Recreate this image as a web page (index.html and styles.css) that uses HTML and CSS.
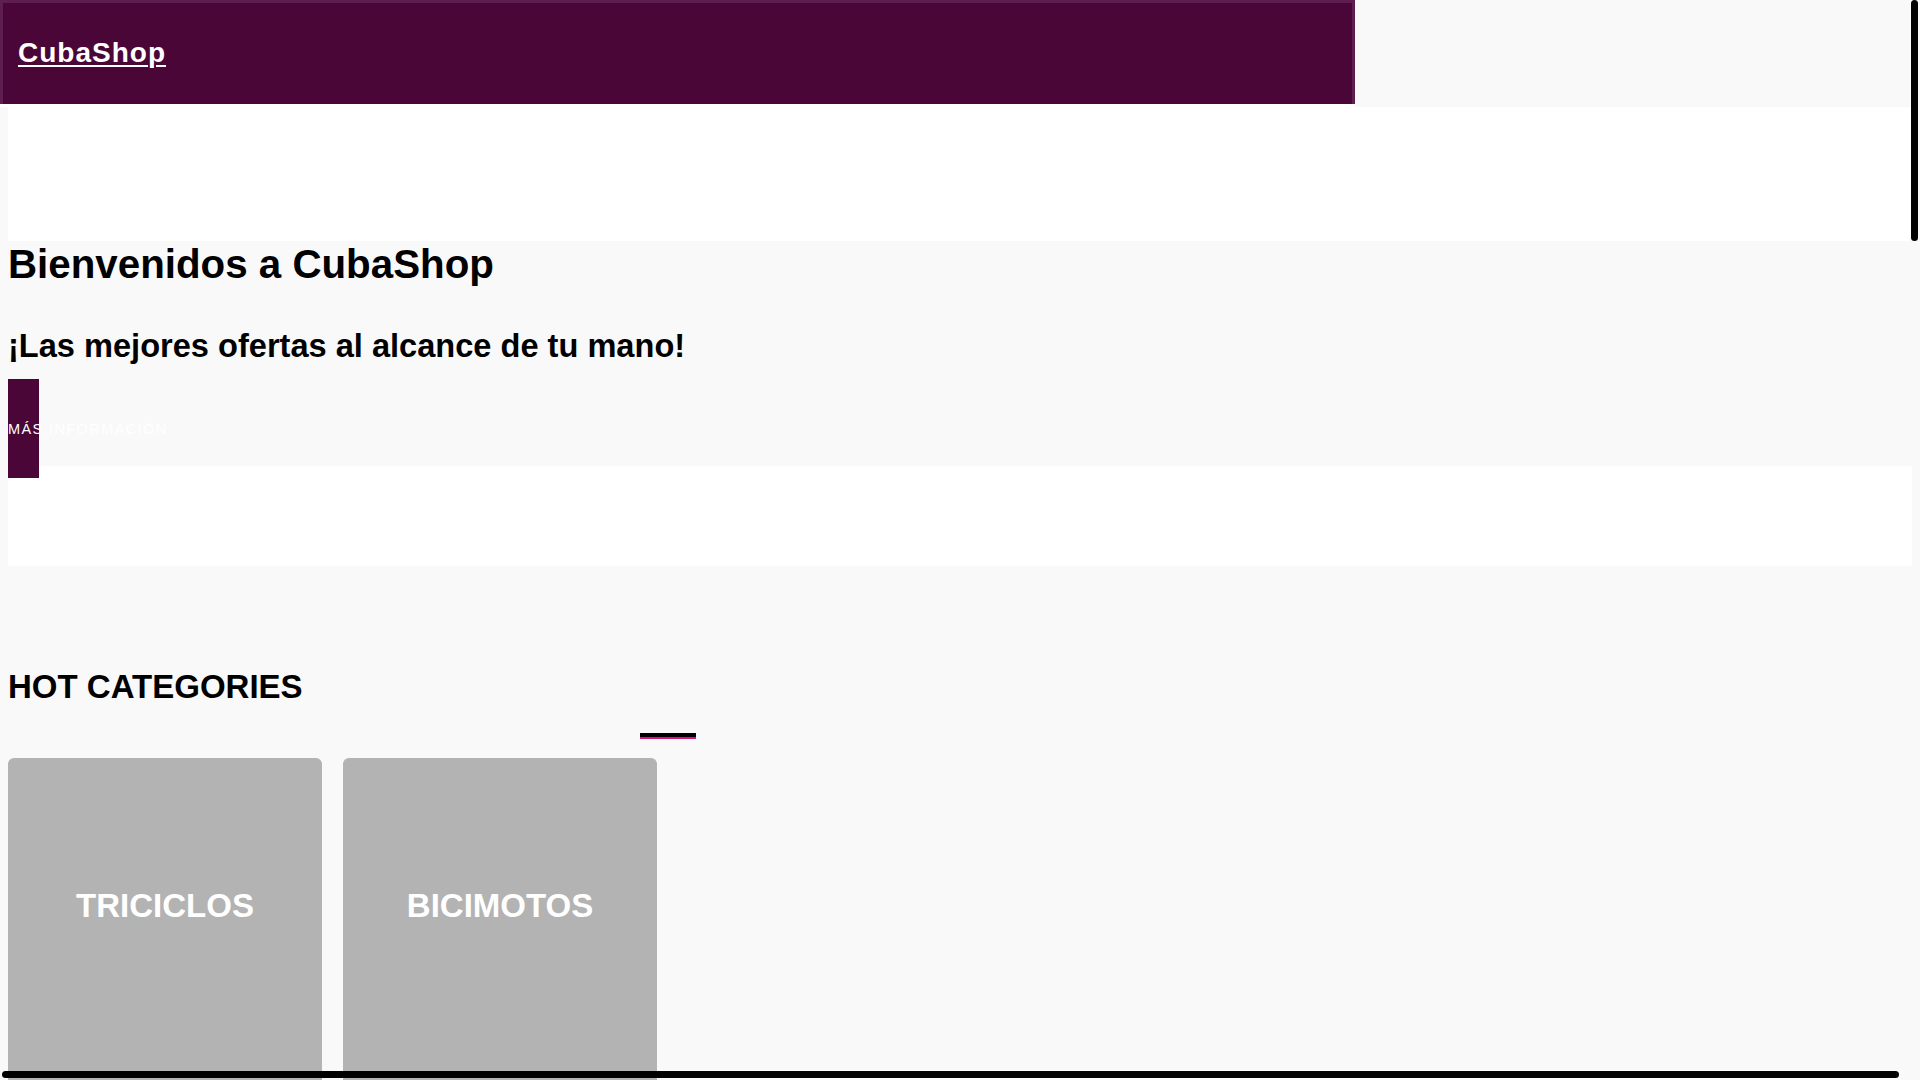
FILE: index.html
```html
<!DOCTYPE html>
<html lang="es">
<head>
<meta charset="utf-8">
<title>CubaShop</title>
<link rel="stylesheet" href="styles.css">
</head>
<body>
<div class="topbar">
  <nav class="navbar"><a class="brand" href="#">CubaShop</a></nav>
  <div class="topfill"></div>
</div>
<main class="main">
  <div class="spacer"></div>
  <section class="hero">
    <h1 class="hero-title">Bienvenidos a CubaShop</h1>
    <h2 class="hero-sub">¡Las mejores ofertas al alcance de tu mano!</h2>
    <a class="hero-btn" href="#">MÁS INFORMACIÓN</a>
  </section>
  <div class="gap"></div>
  <section class="categories">
    <h2 class="cat-title">HOT CATEGORIES</h2>
    <div class="cat-bar"></div>
    <div class="cat-grid">
      <div class="cat-card"><span class="cat-name">TRICICLOS</span></div>
      <div class="cat-card"><span class="cat-name">BICIMOTOS</span></div>
    </div>
  </section>
</main>
<div class="vscroll"></div>
<div class="hscroll"></div>
</body>
</html>
```
FILE: styles.css
```css
html, body {
  margin: 0;
  padding: 0;
  overflow: hidden;
  height: 1080px;
}
body {
  background: #f9f9f9;
  font-family: "Liberation Sans", Arial, sans-serif;
  color: #000;
}
.topbar {
  display: flex;
  width: 1912px;
  height: 107px;
  background: #fff;
}
.navbar {
  box-sizing: border-box;
  width: 1355px;
  height: 104px;
  background: #4a0637;
  border: 3px solid #5e1e4f;
  border-bottom: 0;
  padding: 34px 0 0 15px;
}
.brand {
  color: #fff;
  font-size: 28px;
  font-weight: bold;
  letter-spacing: 1px;
  text-decoration: underline;
  text-underline-offset: 3px;
  text-decoration-thickness: 2px;
  line-height: 32px;
}
.topfill {
  flex: 1;
  background: #f9f9f9;
}
.main {
  margin-left: 8px;
  width: 1904px;
}
.spacer {
  height: 134px;
  background: #fff;
}
.hero {
  box-sizing: border-box;
  height: 225px;
  background: #f9f9f9;
  padding-top: 2px;
}
.hero-title {
  margin: 0;
  font-size: 40.3px;
  line-height: 44px;
  font-weight: bold;
}
.hero-sub {
  margin: 40px 0 0;
  font-size: 32.6px;
  line-height: 37px;
  font-weight: bold;
}
.hero-btn {
  display: flex;
  align-items: center;
  margin-top: 15px;
  width: 31px;
  height: 99px;
  background: #4a0637;
  color: #fff;
  font-size: 14.5px;
  letter-spacing: 1.4px;
  white-space: nowrap;
  text-decoration: none;
  position: relative;
  z-index: 1;
}
.gap {
  height: 100px;
  background: #fff;
}
.categories {
  background: #f9f9f9;
  padding-top: 102px;
}
.cat-title {
  margin: 0;
  font-size: 33px;
  line-height: 37px;
  font-weight: bold;
}
.cat-bar {
  margin: 28px 0 0 632px;
  width: 56px;
  height: 4px;
  background: #000;
  border-bottom: 2px solid #d6157a;
}
.cat-grid {
  display: flex;
  gap: 21px;
  margin-top: 19px;
}
.cat-card {
  width: 314px;
  height: 330px;
  background: #b3b3b3;
  border-radius: 6px 6px 0 0;
  display: flex;
  justify-content: center;
  align-items: flex-start;
  box-sizing: border-box;
  padding-top: 129px;
}
.cat-name {
  color: #fff;
  font-size: 33px;
  line-height: 37px;
  font-weight: bold;
}
.vscroll {
  position: fixed;
  top: 0;
  right: 2px;
  width: 7px;
  height: 241px;
  background: #000;
  border-radius: 4px;
}
.hscroll {
  position: fixed;
  left: 2px;
  bottom: 2px;
  width: 1897px;
  height: 7px;
  background: #000;
  border-radius: 4px;
}
```
